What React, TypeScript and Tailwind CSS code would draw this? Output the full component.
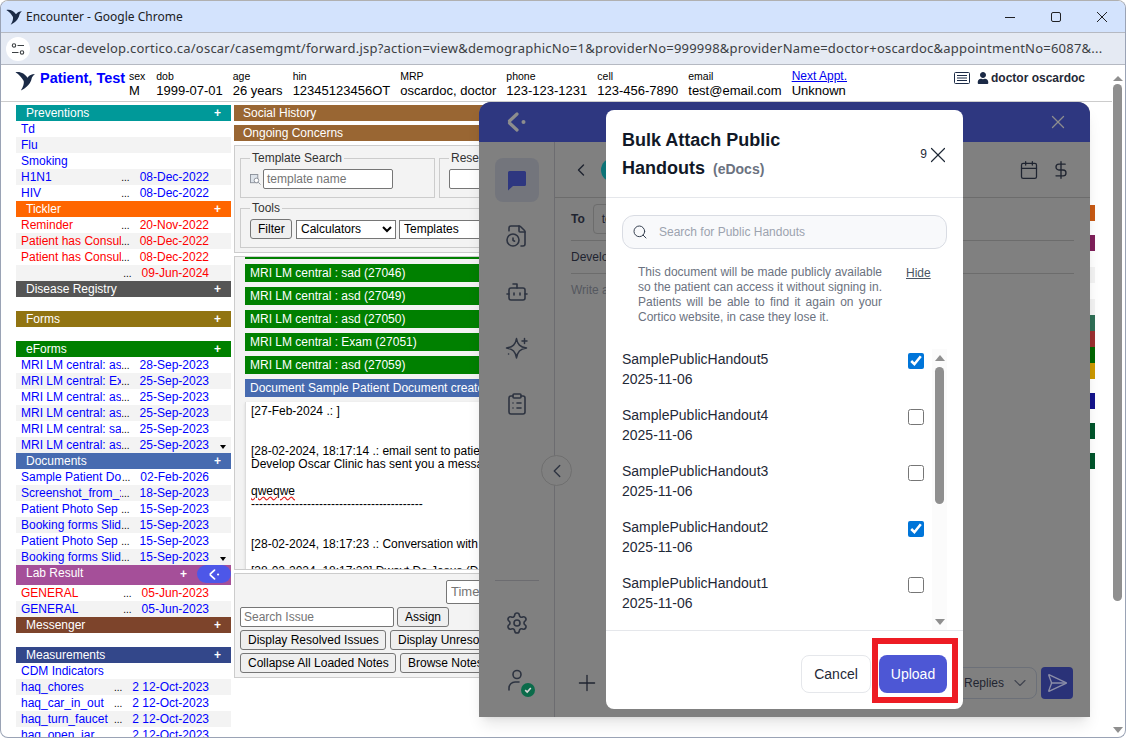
import React from "react";
import {
  Bot,
  Calendar,
  ChevronDown,
  ChevronLeft,
  ClipboardList,
  FileClock,
  Plus,
  Search,
  SendHorizontal,
  Settings,
  DollarSign,
  X,
} from "lucide-react";
import { FaUser } from "react-icons/fa";

type Row = { title?: string; date?: string; red?: boolean };
type Section = {
  name: string;
  bg: string;
  rows?: Row[];
  spacer?: boolean;
  more?: boolean;
};

const eforms: Row[] = [
  { title: "MRI LM central: as", date: "28-Sep-2023" },
  { title: "MRI LM central: Ex", date: "25-Sep-2023" },
  { title: "MRI LM central: as", date: "25-Sep-2023" },
  { title: "MRI LM central: as", date: "25-Sep-2023" },
  { title: "MRI LM central: sa", date: "25-Sep-2023" },
  { title: "MRI LM central: as", date: "25-Sep-2023" },
];

const sections: Section[] = [
  {
    name: "Preventions",
    bg: "bg-[#009999]",
    rows: [
      { title: "Td" },
      { title: "Flu" },
      { title: "Smoking" },
      { title: "H1N1", date: "08-Dec-2022" },
      { title: "HIV", date: "08-Dec-2022" },
    ],
  },
  {
    name: "Tickler",
    bg: "bg-[#ff6600]",
    rows: [
      { title: "Reminder", date: "20-Nov-2022", red: true },
      { title: "Patient has Consul", date: "08-Dec-2022", red: true },
      { title: "Patient has Consul", date: "08-Dec-2022", red: true },
      { title: "", date: "09-Jun-2024", red: true },
    ],
  },
  { name: "Disease Registry", bg: "bg-[#555555]", spacer: true },
  { name: "Forms", bg: "bg-[#917412]", spacer: true },
  { name: "eForms", bg: "bg-[#008000]", rows: eforms, more: true },
  {
    name: "Documents",
    bg: "bg-[#476bb0]",
    more: true,
    rows: [
      { title: "Sample Patient Do", date: "02-Feb-2026" },
      { title: "Screenshot_from_:", date: "18-Sep-2023" },
      { title: "Patient Photo Sep", date: "15-Sep-2023" },
      { title: "Booking forms Slid", date: "15-Sep-2023" },
      { title: "Patient Photo Sep", date: "15-Sep-2023" },
      { title: "Booking forms Slid", date: "15-Sep-2023" },
    ],
  },
];

const afterLab: Section[] = [
  { name: "Messenger", bg: "bg-[#7d442b]", spacer: true },
  {
    name: "Measurements",
    bg: "bg-[#33478a]",
    rows: [
      { title: "CDM Indicators" },
      { title: "haq_chores", date: "2 12-Oct-2023" },
      { title: "haq_car_in_out", date: "2 12-Oct-2023" },
      { title: "haq_turn_faucet", date: "2 12-Oct-2023" },
      { title: "haq_open_jar", date: "2 12-Oct-2023" },
    ],
  },
];

const stripes = [
  { color: "bg-[#c85a14]", gap: "mt-[100px]" },
  { color: "bg-[#7f1f5a]", gap: "mt-[14px]" },
  { color: "bg-[#f3f3f3]", gap: "mt-[16px]" },
  { color: "bg-[#f3f3f3]", gap: "mt-[16px]" },
  { color: "bg-[#2f6f55]", gap: "" },
  { color: "bg-[#9b3030]", gap: "" },
  { color: "bg-[#006600]", gap: "" },
  { color: "bg-[#cc9900]", gap: "" },
  { color: "bg-[#14148c]", gap: "mt-[14px]" },
  { color: "bg-[#00552b]", gap: "mt-[14px]" },
  { color: "bg-[#00552b]", gap: "mt-[14px]" },
];

const greenNotes = [
  "MRI LM central : sad (27046)",
  "MRI LM central : asd (27049)",
  "MRI LM central : asd (27050)",
  "MRI LM central : Exam (27051)",
  "MRI LM central : asd (27059)",
];

const handouts = [
  { name: "SamplePublicHandout5", checked: true },
  { name: "SamplePublicHandout4", checked: false },
  { name: "SamplePublicHandout3", checked: false },
  { name: "SamplePublicHandout2", checked: true },
  { name: "SamplePublicHandout1", checked: false },
];

const Swift = ({ className }: { className: string }) => (
  <svg viewBox="0 0 24 24" className={className} fill="#1b2a46">
    <path d="M0.500 1.500C6 0 12 3 15 8C17 5 20 3.500 24 3.500C22 5 20.500 7 20 9C19 15 14 20 7 23.500C10 19 11 15 10.500 12C8 8 5 4 0.500 1.500Z" />
  </svg>
);

const CorticoMark = ({ color, className }: { color: string; className: string }) => (
  <svg viewBox="0 0 20 20" className={className} fill="none">
    <path d="M10 2L2.500 9M2.500 11L10 18" stroke={color} strokeWidth="3.200" strokeLinecap="round" />
    <circle cx="16.500" cy="10" r="2" fill={color} />
  </svg>
);

const SectionHeader = ({ name, bg }: { name: string; bg: string }) => (
  <div className={`flex h-4 items-center justify-between pl-[10px] pr-[10px] text-white ${bg}`}>
    <span>{name}</span>
    <span className="font-bold">+</span>
  </div>
);

const SectionRows = ({ rows, more }: { rows: Row[]; more?: boolean }) => (
  <div>
    {rows.map((row, i) => (
      <div
        key={i}
        className={`flex h-4 items-center pl-[5px] whitespace-nowrap ${row.red ? "text-[#ff0000]" : "text-[#0000ff]"} ${i % 2 ? "bg-[#f3f3f3]" : "bg-white"}`}
      >
        <span className="min-w-0 flex-1 overflow-hidden">{row.title}</span>
        {row.date && <span className="mr-[10px] text-[10px] text-black">...</span>}
        {row.date && <span>{row.date}</span>}
        <span className="flex h-4 w-[22px] shrink-0 items-start justify-end pt-[8px] pr-[5px]">
          {more && i === rows.length - 1 && (
            <span className="border-x-[3.500px] border-t-[4px] border-x-transparent border-t-black" />
          )}
        </span>
      </div>
    ))}
  </div>
);

const SectionBlock = ({ section }: { section: Section }) => (
  <div>
    <SectionHeader name={section.name} bg={section.bg} />
    {section.rows && <SectionRows rows={section.rows} more={section.more} />}
    {section.spacer && <div className="h-[14px]" />}
  </div>
);

const OldButton = ({ label, className = "" }: { label: string; className?: string }) => (
  <button className={`h-5 shrink-0 rounded-[3px] border border-[#767676] bg-[#efefef] px-[7px] whitespace-nowrap text-black ${className}`}>
    {label}
  </button>
);

const Field = ({ label, className, children }: { label: string; className: string; children: React.ReactNode }) => (
  <fieldset className={`border border-[#cccccc] ${className}`}>
    <legend className="px-[2px] leading-[14px] text-[#333333]">{label}</legend>
    {children}
  </fieldset>
);

const Sidebar = () => (
  <div className="relative flex w-[76px] shrink-0 flex-col items-center border-r border-[#6c6c70] pt-4 pb-[15px] text-[#2d3340]">
    <div className="flex h-11 w-11 items-center justify-center rounded-lg bg-[#73757c]">
      <svg viewBox="0 0 24 24" className="h-6 w-6" fill="#2e3780">
        <path d="M3 4.500A1.500 1.500 0 0 1 4.500 3h15A1.500 1.500 0 0 1 21 4.500v12a1.500 1.500 0 0 1-1.500 1.500H8l-5 4.500z" />
      </svg>
    </div>
    <div className="mt-3 flex h-11 w-11 items-center justify-center">
      <FileClock size={24} strokeWidth={1.6} />
    </div>
    <div className="mt-3 flex h-11 w-11 items-center justify-center">
      <Bot size={24} strokeWidth={1.6} />
    </div>
    <div className="mt-3 flex h-11 w-11 items-center justify-center">
      <svg viewBox="0 0 24 24" className="h-6 w-6" fill="none" stroke="currentColor" strokeWidth="1.500" strokeLinejoin="round" strokeLinecap="round">
        <path d="M11.500 2.500C12.500 8.500 15 11 21.500 12C15 13 12.500 15.500 11.500 22C10.500 15.500 8 13 1.500 12C8 11 10.500 8.500 11.500 2.500Z" />
        <path d="M19.500 2.500V7.500M17 5H22" />
        <path d="M3.500 18H3.600" />
      </svg>
    </div>
    <div className="mt-3 flex h-11 w-11 items-center justify-center">
      <ClipboardList size={24} strokeWidth={1.6} />
    </div>
    <div className="mt-auto w-11 border-t border-[#6c6c70]" />
    <div className="mt-5 flex h-11 w-11 items-center justify-center">
      <Settings size={24} strokeWidth={1.6} />
    </div>
    <div className="relative mt-[13px] flex h-11 w-11 items-center justify-center">
      <svg viewBox="0 0 24 24" className="h-6 w-6" fill="none" stroke="currentColor" strokeWidth="1.600" strokeLinecap="round">
        <circle cx="12" cy="6.500" r="4" />
        <path d="M4 22v-2a6 6 0 0 1 6-6h4" />
      </svg>
      <span className="absolute right-[4px] bottom-[5px] flex h-[14px] w-[14px] items-center justify-center rounded-full bg-[#0b6b4a]">
        <svg viewBox="0 0 10 10" className="h-2 w-2" fill="none" stroke="#d8d8d8" strokeWidth="2">
          <path d="M1.500 5.200L4 7.500L8.500 2.500" />
        </svg>
      </span>
    </div>
    <div className="absolute top-[313px] left-[62px] flex h-[31px] w-[31px] items-center justify-center rounded-full border border-[#6f6f6f] bg-[#808080]">
      <ChevronLeft size={22} strokeWidth={1.5} />
    </div>
  </div>
);

const Modal = () => (
  <div className="absolute top-2 left-[127px] flex h-[599px] w-[357px] flex-col overflow-hidden rounded-lg bg-white">
    <div className="flex h-[88px] shrink-0 items-center justify-between border-b border-[#e5e7eb] pt-[2px] pr-[12px] pl-4">
      <div className="w-[200px] text-[18px] leading-[28px] font-bold text-[#111827]">
        Bulk Attach Public
        <br />
        Handouts <span className="ml-[3px] text-[14px] text-[#6b7280]">(eDocs)</span>
      </div>
      <div className="flex items-center text-[12px] text-[#1f2937]">
        <span className="mb-[1px]">9</span>
        <X size={26} strokeWidth={1.1} className="-ml-[2px]" />
      </div>
    </div>
    <div className="mx-4 mt-[17px] flex h-[34px] shrink-0 items-center rounded-xl border border-[#d9dce3] bg-[#f8f9fb] pl-[9px]">
      <Search size={16} strokeWidth={1.5} className="text-[#374151]" />
      <span className="ml-[11px] text-[12px] text-[#9ca3af]">Search for Public Handouts</span>
    </div>
    <div className="mt-4 flex shrink-0 pl-8">
      <p className="w-[244px] text-justify text-[12px] leading-[15px] text-[#6b7280]">
        This document will be made publicly available so the patient can access it without signing in. Patients will be able to find it again on your Cortico website, in case they lose it.
      </p>
      <span className="ml-[24px] text-[12px] leading-[16px] text-[#4b5563] underline">Hide</span>
    </div>
    <div className="mt-[24px] flex h-[281px] shrink-0 pl-4">
      <div className="flex-1">
        {handouts.map((item) => (
          <div key={item.name} className="flex h-14 justify-between pr-[8px] text-[14px] leading-5 text-[#1f2937]">
            <div>
              <div>{item.name}</div>
              <div>2025-11-06</div>
            </div>
            <input type="checkbox" defaultChecked={item.checked} className="mt-1 h-4 w-4 accent-[#0075d9]" />
          </div>
        ))}
      </div>
      <div className="mr-4 flex w-[15px] flex-col items-center bg-[#fbfbfb] pt-[6px]">
        <span className="border-x-[5px] border-b-[6px] border-x-transparent border-b-[#8f8f8f]" />
        <span className="mt-[6px] h-[137px] w-[9px] rounded-full bg-[#8f8f8f]" />
        <span className="mt-auto mb-[5px] border-x-[5px] border-t-[6px] border-x-transparent border-t-[#8f8f8f]" />
      </div>
    </div>
    <div className="relative flex flex-1 justify-end gap-2 border-t border-[#e5e7eb] pt-6 pr-4">
      <button className="h-[38px] w-[70px] rounded-lg border border-[#e5e7eb] bg-white text-[14px] text-[#1f2937]">Cancel</button>
      <button className="h-[38px] w-[68px] rounded-lg bg-[#4d57d5] text-[14px] text-white">Upload</button>
      <div className="absolute top-[7px] right-[5px] h-[65px] w-[86px] border-[6px] border-[#ed1c24]" />
    </div>
  </div>
);

const ChatPanel = () => (
  <div className="absolute top-[101px] left-[478px] flex h-[615px] w-[611px] flex-col rounded-t-xl bg-[#808080] shadow-lg">
    <div className="flex h-10 shrink-0 items-center justify-between rounded-t-xl bg-[#2e3780] pr-[21px] pl-[28px]">
      <CorticoMark color="#8d8d8d" className="h-[20px] w-[20px]" />
      <X size={22} strokeWidth={1.4} className="text-[#8d8d8d]" />
    </div>
    <div className="flex min-h-0 flex-1">
      <Sidebar />
      <div className="flex min-w-0 flex-1 flex-col text-[#1f2430]">
        <div className="flex h-[56px] shrink-0 items-center justify-between border-b border-[#6c6c6c] pr-[19px] pl-[16px]">
          <div className="flex items-center gap-[10px]">
            <ChevronLeft size={20} strokeWidth={1.7} />
            <span className="h-6 w-6 rounded-full bg-[#0d7377]" />
          </div>
          <div className="flex items-center gap-[12px]">
            <Calendar size={20} strokeWidth={1.5} />
            <DollarSign size={20} strokeWidth={1.6} />
          </div>
        </div>
        <div className="mx-4 flex h-[43px] shrink-0 items-center gap-2 border-b border-[#6c6c6c] text-[12px]">
          <span className="font-bold">To</span>
          <span className="rounded border border-[#6c6c6c] px-[8px] py-[5px]">test patient</span>
        </div>
        <div className="mx-4 flex h-[33px] shrink-0 items-center border-b border-[#6c6c6c] text-[12px]">Develop Oscar Clinic</div>
        <div className="mx-4 mt-[7px] text-[12px] text-[#55585f]">Write a</div>
        <div className="mt-auto mb-[18px] flex h-8 items-center justify-between pr-[17px] pl-[19px]">
          <Plus size={26} strokeWidth={1.2} />
          <div className="flex items-center gap-1">
            <div className="flex h-8 items-center gap-[6px] rounded-lg border border-[#6c7078] pr-[6px] pl-3 text-[12px]">
              Quick Replies
              <ChevronDown size={20} strokeWidth={1.4} className="text-[#40444f]" />
            </div>
            <div className="flex h-8 w-8 items-center justify-center rounded bg-[#2a3278]">
              <SendHorizontal size={22} strokeWidth={1.5} className="text-[#8b8da8]" />
            </div>
          </div>
        </div>
      </div>
    </div>
    <Modal />
  </div>
);

export default function App() {
  return (
    <div className="relative flex h-[738px] w-[1126px] flex-col overflow-hidden rounded-lg border border-[#9aa3b5] border-t-[#b0b0b0] bg-white font-['Liberation_Sans',Arial,sans-serif] text-[12px] text-black">
      {/* chrome title bar */}
      <div className="flex h-[31px] shrink-0 items-center bg-[#d3e3fd] pl-[5px] font-['Noto_Sans',sans-serif]">
        <Swift className="h-4 w-4" />
        <span className="ml-[4px] text-[12px] text-[#202124]">Encounter - Google Chrome</span>
        <div className="ml-auto flex items-center pr-[17px] text-[#202124]">
          <svg viewBox="0 0 12 12" className="h-3 w-3" stroke="currentColor" fill="none"><path d="M1 6.500H11" /></svg>
          <svg viewBox="0 0 12 12" className="ml-[34px] h-3 w-3" stroke="currentColor" fill="none"><rect x="1.500" y="1.500" width="9" height="9" rx="1.500" /></svg>
          <svg viewBox="0 0 12 12" className="ml-[34px] h-3 w-3" stroke="currentColor" fill="none"><path d="M1 1L11 11M11 1L1 11" /></svg>
        </div>
      </div>
      {/* address bar */}
      <div className="flex h-[33px] shrink-0 items-center border-y border-[#b5b9c2] bg-[#e5eaf3] pl-[5px]">
        <span className="flex h-6 w-6 items-center justify-center rounded-full bg-white">
          <svg viewBox="0 0 14 14" className="h-[14px] w-[14px]" fill="none" stroke="#3c4043" strokeWidth="1.100">
            <circle cx="3" cy="3.500" r="1.700" />
            <path d="M6.500 3.500H13M1 10.500H7.500" />
            <circle cx="11" cy="10.500" r="1.700" />
          </svg>
        </span>
        <span className="ml-2 font-['Noto_Sans',sans-serif] text-[13px] tracking-[0.22px] whitespace-nowrap text-[#3c4043]">
          oscar-develop.cortico.ca/oscar/casemgmt/forward.jsp?action=view&demographicNo=1&providerNo=999998&providerName=doctor+oscardoc&appointmentNo=6087&...
        </span>
      </div>
      <div className="flex min-h-0 flex-1">
        <div className="flex min-w-0 flex-1 flex-col">
          {/* patient header */}
          <div className="flex h-[37px] shrink-0 border-b border-[#cccccc] pt-[5px] pl-[14px]">
            <Swift className="mt-[1px] h-5 w-5" />
            <span className="ml-[5px] w-[89px] pt-[1px] text-[14.500px] leading-[15px] font-bold whitespace-nowrap text-[#0000ff]">Patient, Test</span>
            <div className="flex gap-[10px] whitespace-nowrap">
              {[
                ["sex", "M"],
                ["dob", "1999-07-01"],
                ["age", "26 years"],
                ["hin", "12345123456OT"],
                ["MRP", "oscardoc, doctor"],
                ["phone", "123-123-1231"],
                ["cell", "123-456-7890"],
                ["email", "test@email.com"],
              ].map(([label, value]) => (
                <div key={label} className="first:w-[17.250px]">
                  <div className="text-[10.500px] leading-[13px]">{label}</div>
                  <div className="text-[13px] leading-[15px]">{value}</div>
                </div>
              ))}
              <div>
                <div className="text-[12px] leading-[13px] text-[#0000ee] underline">Next Appt.</div>
                <div className="text-[13px] leading-[15px]">Unknown</div>
              </div>
            </div>
            <div className="ml-auto flex h-4 items-center pr-[27px]">
              <svg viewBox="0 0 16 12" className="h-3 w-4" fill="none" stroke="#1b2a46">
                <rect x="0.500" y="0.500" width="15" height="11" rx="1" />
                <path d="M3 3.500H13M3 6H13M3 8.500H13" />
              </svg>
              <FaUser size={12} className="ml-[7px] text-[#1b2a46]" />
              <span className="ml-[2px] font-bold text-[#1f2937]">doctor oscardoc</span>
            </div>
          </div>
          {/* encounter columns */}
          <div className="flex pt-[3px] pl-[15px]">
            <div className="relative w-[215px] shrink-0">
              {sections.map((s) => (
                <SectionBlock key={s.name} section={s} />
              ))}
              <div className="flex h-5 justify-between bg-[#a54f99] pr-[44px] pl-[10px] text-white">
                <span className="pt-px leading-[15px]">Lab Result</span>
                <span className="font-bold">+</span>
                <span className="absolute right-0 flex h-[18px] w-[34px] items-center justify-center rounded-full bg-[#4d57e8]">
                  <CorticoMark color="#ffffff" className="h-[11px] w-[11px]" />
                </span>
              </div>
              <SectionRows
                rows={[
                  { title: "GENERAL", date: "05-Jun-2023", red: true },
                  { title: "GENERAL", date: "05-Jun-2023" },
                ]}
              />
              {afterLab.map((s) => (
                <SectionBlock key={s.name} section={s} />
              ))}
            </div>
            <div className="ml-[3px] w-[600px] shrink-0">
              <div className="h-4 bg-[#996633] pt-px pl-[9px] leading-[15px] text-white">Social History</div>
              <div className="mt-1 h-4 bg-[#996633] pt-px pl-[9px] leading-[15px] text-white">Ongoing Concerns</div>
              <div className="mt-1 h-[108px] border border-[#cccccc] bg-[#f3f3f3] pt-[5px] pl-[5px]">
                <div className="flex gap-1">
                  <Field label="Template Search" className="h-[47px] w-[195px] pl-[9px]">
                    <div className="flex items-center pt-[4px]">
                      <svg viewBox="0 0 12 12" className="h-[11px] w-[11px]" fill="none" stroke="#8a8f99">
                        <rect x="0.500" y="0.500" width="8" height="9" fill="#dde3ea" />
                        <circle cx="7" cy="7" r="2.500" fill="#ffffff" />
                        <path d="M9 9L11.500 11.500" />
                      </svg>
                      <div className="ml-[2px] flex h-5 w-[130px] items-center rounded-[2px] border border-[#767676] bg-white pl-[3px] text-[#757575]">template name</div>
                    </div>
                  </Field>
                  <Field label="Reservation" className="h-[47px] w-[300px] pl-[9px]">
                    <div className="mt-[4px] h-5 w-[200px] rounded-[2px] border border-[#767676] bg-white" />
                  </Field>
                </div>
                <Field label="Tools" className="mt-[3px] h-[47px] w-[580px] pl-[9px]">
                  <div className="flex items-center gap-1 pt-[4px]">
                    <OldButton label="Filter" className="w-[42px] px-0" />
                    <select className="h-[19px] w-[100px] border border-[#767676] bg-white text-[12px]">
                      <option>Calculators</option>
                    </select>
                    <select className="-ml-px h-[19px] w-[140px] border border-[#767676] bg-white text-[12px]">
                      <option>Templates</option>
                    </select>
                  </div>
                </Field>
              </div>
              <div className="mt-[3px] h-[314px] overflow-hidden border border-[#cccccc] bg-[#f3f3f3] pl-[10px]">
                <div className="h-[2px] bg-[#008000]" />
                {greenNotes.map((note) => (
                  <div key={note} className="mt-[5px] flex h-[18px] items-center bg-[#008000] pl-[5px] text-white">
                    {note}
                  </div>
                ))}
                <div className="mt-[5px] flex h-[18px] items-center bg-[#476bb0] pl-[5px] whitespace-nowrap text-white">
                  Document Sample Patient Document created
                </div>
                <div className="mt-[5px] h-[200px] border-l border-[#dddddd] bg-white pt-[3px] pl-[5px] leading-[13.330px] shadow-sm">
                  [27-Feb-2024 .: ]
                  <br />
                  <br />
                  <br />
                  [28-02-2024, 18:17:14 .: email sent to patient
                  <br />
                  Develop Oscar Clinic has sent you a message
                  <br />
                  <br />
                  <span className="underline decoration-[#e02020] decoration-wavy">qweqwe</span>
                  <br />
                  -------------------------------------------
                  <br />
                  <br />
                  <br />
                  [28-02-2024, 18:17:23 .: Conversation with
                  <br />
                  <br />
                  [28-02-2024, 18:17:22] Dwayt De Jesus (Doctor)
                </div>
              </div>
              <div className="mt-[3px] flex h-[105px] flex-col gap-[3px] border border-[#cccccc] bg-[#f3f3f3] pt-[6px] pl-[5px]">
                <div className="ml-[206px] flex h-[24px] w-[200px] items-center rounded-[2px] border border-[#767676] bg-white pl-1 text-[13px] text-[#757575]">Time</div>
                <div className="flex gap-[3px]">
                  <div className="flex h-5 w-[154px] items-center rounded-[2px] border border-[#767676] bg-white pl-[3px] text-[#757575]">Search Issue</div>
                  <OldButton label="Assign" className="w-[52px] px-0" />
                </div>
                <div className="flex gap-1">
                  <OldButton label="Display Resolved Issues" className="w-[146px] px-0" />
                  <OldButton label="Display Unresolved Issues" />
                </div>
                <div className="flex gap-1">
                  <OldButton label="Collapse All Loaded Notes" className="w-[156px] px-0" />
                  <OldButton label="Browse Notes" />
                </div>
              </div>
            </div>
            <div className="ml-[6px] w-[255px] shrink-0">
              {stripes.map((stripe, i) => (
                <div key={i} className={`h-4 ${stripe.color} ${stripe.gap}`} />
              ))}
            </div>
          </div>
        </div>
        {/* page scrollbar */}
        <div className="flex w-[13px] shrink-0 flex-col pt-[11px] pl-[1px]">
          <span className="w-0 border-x-[5px] border-b-[5px] border-x-transparent border-b-[#8f8f8f]" />
          <span className="mt-[3px] h-[517px] w-[9px] rounded-full bg-[#8f8f8f]" />
          <span className="mt-[126px] w-0 border-x-[5px] border-t-[6px] border-x-transparent border-t-[#8f8f8f]" />
        </div>
      </div>
      <ChatPanel />
    </div>
  );
}
